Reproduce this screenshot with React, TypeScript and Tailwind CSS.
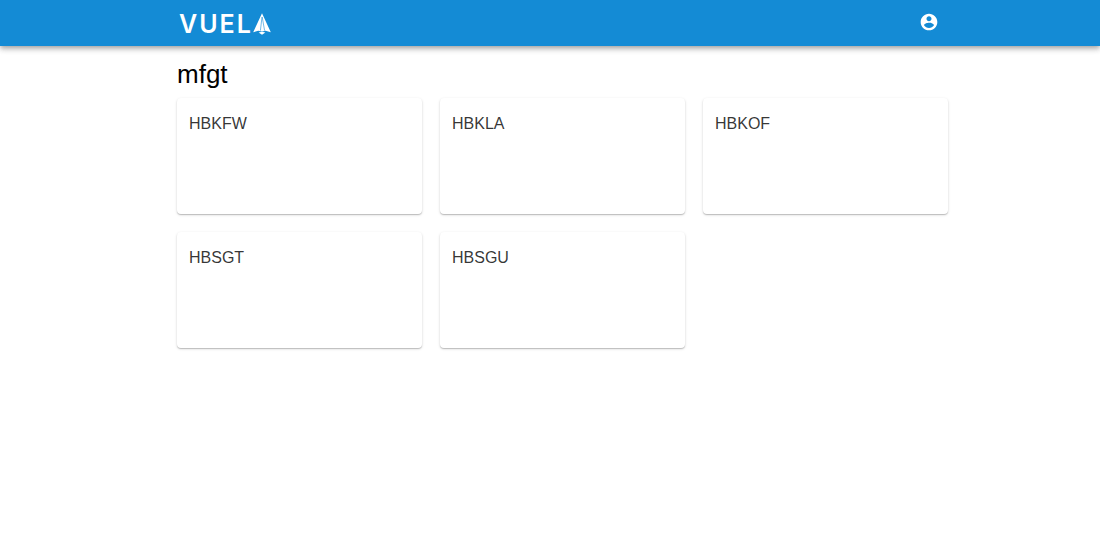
const aircrafts: string[] = ["HBKFW", "HBKLA", "HBKOF", "HBSGT", "HBSGU"];

function Logo() {
  return (
    <a href="#home" aria-label="Vuela" className="flex items-center gap-0.5 pt-px text-white">
      <span className="flex gap-0.5 font-['Inter',sans-serif] text-[25px] leading-6 font-semibold">
        <span>V</span>
        <span>U</span>
        <span>E</span>
        <span>L</span>
      </span>
      <svg width="18" height="22" viewBox="0 0 18 22" fill="currentColor" aria-hidden="true">
        <path d="M9 0.2 L17.8 19.2 L12.6 17.8 L9 18.6 L5.2 17.8 L0.2 19.2 Z" />
        <path d="M9 4 L7.4 17.6 M9.2 4 L11.6 17.6" fill="none" stroke="#148bd5" strokeWidth="0.6" />
        <path d="M5.6 19.5 L9 18.8 L12.4 19.5 L9 21.8 Z" />
      </svg>
    </a>
  );
}

function AccountButton() {
  return (
    <button type="button" aria-label="Account" className="pb-0.5 text-white">
      <svg width="20" height="20" viewBox="0 0 24 24" fill="currentColor" aria-hidden="true">
        <path d="M12 2C6.48 2 2 6.48 2 12s4.48 10 10 10 10-4.48 10-10S17.52 2 12 2zm0 3c1.66 0 3 1.34 3 3s-1.34 3-3 3-3-1.34-3-3 1.34-3 3-3zm0 14.2c-2.5 0-4.71-1.28-6-3.22.03-1.99 4-3.08 6-3.08 1.99 0 5.97 1.09 6 3.08-1.29 1.94-3.5 3.22-6 3.22z" />
      </svg>
    </button>
  );
}

export default function App() {
  return (
    <div className="min-h-screen bg-white font-['Liberation_Sans',Arial,sans-serif]">
      <header className="bg-[#148bd5] shadow-[0_2px_4px_-1px_rgba(0,0,0,0.2),0_4px_5px_rgba(0,0,0,0.14),0_1px_8px_rgba(0,0,0,0.12)]">
        <div className="mx-auto flex h-[46px] max-w-[796px] items-center justify-between pr-[9px] pl-[27px]">
          <Logo />
          <AccountButton />
        </div>
      </header>
      <main className="mx-auto max-w-[796px] pt-3 pl-[25px]">
        <h1 className="mb-2 text-[26px] leading-8 text-black">mfgt</h1>
        <ul className="grid grid-cols-3 gap-[18px]">
          {aircrafts.map((name) => (
            <li key={name}>
              <a
                href={`#${name}`}
                className="block min-h-[116px] rounded-[4px] bg-white px-3 py-4 text-base leading-5 text-black/80 shadow-[0_1px_1px_rgba(0,0,0,0.18),0_1px_3px_rgba(0,0,0,0.14)]"
              >
                {name}
              </a>
            </li>
          ))}
        </ul>
      </main>
    </div>
  );
}
